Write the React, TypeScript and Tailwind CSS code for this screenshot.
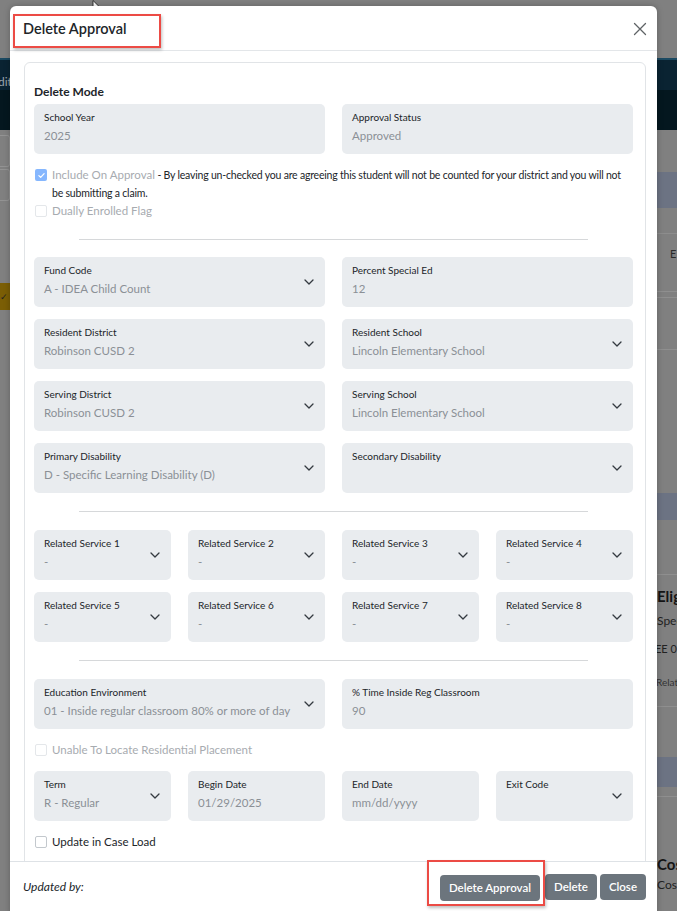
import React from "react";

type FieldProps = { label: string; value?: string; select?: boolean };

function Chevron({ className }: { className?: string }) {
  return (
    <svg viewBox="0 0 10 6" className={className} width="10" height="6" fill="none">
      <path d="M1 1l4 4 4-4" stroke="#343a40" strokeWidth="1.3" strokeLinecap="round" strokeLinejoin="round" />
    </svg>
  );
}

function Field({ label, value, select }: FieldProps) {
  return (
    <div className="relative h-[50px] rounded-[5px] bg-[#e9ecef] pl-[10px] pr-[26px] pt-[6px]">
      <div className="whitespace-nowrap text-[10px] leading-[14px] text-[#212529]">{label}</div>
      <div className="mt-[4px] whitespace-nowrap text-[11.5px] leading-[16px] text-[#8b9096]">{value}</div>
      {select && <Chevron className="absolute right-[11px] top-[22px]" />}
    </div>
  );
}

function Box({ checked, disabled }: { checked?: boolean; disabled?: boolean }) {
  if (checked) {
    return (
      <span className="mt-[3px] flex h-[12px] w-[12px] shrink-0 items-center justify-center rounded-[2px] bg-[#86b7fe]">
        <svg viewBox="0 0 12 12" width="9" height="9" fill="none">
          <path d="M2.5 6.2l2.4 2.3 4.6-5" stroke="white" strokeWidth="1.6" strokeLinecap="round" strokeLinejoin="round" />
        </svg>
      </span>
    );
  }
  return (
    <span
      className={
        disabled
          ? "mt-[3px] h-[12px] w-[12px] shrink-0 rounded-[2px] border border-[#e4e7ea] bg-white"
          : "mt-[3px] h-[12px] w-[12px] shrink-0 rounded-[2px] border border-[#c3c8cd] bg-white"
      }
    />
  );
}

function CheckRow({ label, disabled, className }: { label: string; disabled?: boolean; className?: string }) {
  return (
    <div className={"flex items-start gap-[5px] pl-[1px] " + (className ?? "")}>
      <Box disabled={disabled} />
      <span className={disabled ? "text-[11.5px] leading-[18px] text-[#a7abb0]" : "text-[11.5px] leading-[18px] text-[#212529]"}>
        {label}
      </span>
    </div>
  );
}

function Rule({ className }: { className?: string }) {
  return <div className={"mx-[45px] h-px bg-[#d6d8da] " + (className ?? "")} />;
}

function Background() {
  return (
    <div className="flex h-full flex-col">
      <div className="h-[58px] shrink-0" />
      <div className="h-[2px] shrink-0 bg-[#1c4a62]" />
      <div className="flex h-[30px] shrink-0 items-end bg-[#0a2332]">
        <span className="-ml-[2px] text-[12px] leading-[16px] text-[#9aa6ad]">diti</span>
      </div>
      <div className="h-[40px] shrink-0 bg-[#04171f]" />
      <div className="flex flex-1 justify-between">
        <div className="flex w-[10px] flex-col">
          <div className="mt-[5px] h-[32px] rounded-r-[3px] border border-l-0 border-[#939393]" />
          <div className="mt-[2px] h-[32px] rounded-r-[3px] border border-l-0 border-[#939393]" />
          <div className="mt-[82px] flex h-[27px] items-center bg-[#7b5e05] text-[9px] leading-none text-[#222]">✓</div>
        </div>
        <div className="flex w-[20px] flex-col overflow-hidden whitespace-nowrap">
          <div className="h-[42px]" />
          <div className="h-[36px] bg-[#6c7383]" />
          <div className="h-[26px] border-b border-[#8d8d8d]" />
          <div className="flex h-[40px] items-center pl-[13px] text-[11px] text-[#2a2a2a]">E</div>
          <div className="h-[18px] border-b border-[#8f8f8f]" />
          <div className="h-[6px] border-b border-[#8f8f8f]" />
          <div className="h-[52px] border-b border-[#8f8f8f]" />
          <div className="h-[143px]" />
          <div className="h-[27px] bg-[#6c7383]" />
          <div className="h-[55px] border-b border-[#8f8f8f]" />
          <div className="mt-[11px] text-[15px] font-bold leading-[20px] text-[#141414]">Eligi</div>
          <div className="mt-[7px] text-[12px] leading-[16px] text-[#222]">Spec</div>
          <div className="mt-[12px] -ml-[2px] text-[11px] leading-[16px] text-[#222]">EE 01</div>
          <div className="mt-[18px] -ml-[1px] text-[10px] leading-[14px] text-[#333]">Relat</div>
          <div className="h-[18px] border-b border-[#8f8f8f]" />
          <div className="mt-[50px] h-[30px] bg-[#6c7383]" />
          <div className="h-[10px] border-b border-[#8f8f8f]" />
          <div className="mt-[57px] text-[15px] font-bold leading-[20px] text-[#141414]">Cost</div>
          <div className="mt-[3px] text-[12px] leading-[16px] text-[#222]">Cost</div>
        </div>
      </div>
    </div>
  );
}

export default function App() {
  return (
    <div className="relative h-[911px] w-[677px] overflow-hidden bg-[#808080] font-['Lato','Noto_Sans',sans-serif]">
      <Background />

      <svg className="absolute left-[92px] top-0" width="11" height="16" viewBox="0 0 11 16">
        <path d="M1 0.5v12.5l3-2.8 2.2 4.8 1.9-.9-2.2-4.7h4.1z" fill="white" stroke="#222" strokeWidth="0.9" strokeLinejoin="round" />
      </svg>

      <div className="absolute left-[10px] top-[6px] flex h-[910px] w-[647px] flex-col rounded-t-[6px] bg-white shadow-[0_0_6px_rgba(0,0,0,0.25)]">
        <div className="flex h-[45px] shrink-0 items-start justify-between border-b border-[#e3e6e9]">
          <div className="ml-[3px] mt-[8px] h-[34px] w-[148px] border-2 border-[#ec4b45] pl-[8px] shadow-[1px_2px_3px_rgba(0,0,0,0.25)]">
            <span className="text-[14.5px] font-semibold leading-[26px] text-[#212529]">Delete Approval</span>
          </div>
          <svg className="mr-[10px] mt-[16px]" width="14" height="14" viewBox="0 0 14 14" fill="none">
            <path d="M1.5 1.5l11 11M12.5 1.5l-11 11" stroke="#5f6366" strokeWidth="1.3" strokeLinecap="round" />
          </svg>
        </div>

        <div className="flex-1 overflow-hidden pl-[14px] pr-[11px] pt-[11px]">
          <div className="h-[900px] rounded-[6px] border border-[#e1e4e7] pl-[9px] pr-[12px] pt-[21px]">
            <div className="text-[12px] font-bold leading-[16px] text-[#212529]">Delete Mode</div>
            <div className="mt-[4px] grid grid-cols-2 gap-x-[17px]">
              <Field label="School Year" value="2025" />
              <Field label="Approval Status" value="Approved" />
            </div>

            <div className="mt-[12px] flex items-start gap-[5px] pl-[1px]">
              <Box checked />
              <p className="text-[10.5px] leading-[18px] tracking-[-0.2px] text-[#212529]">
                <span className="text-[11.5px] tracking-normal text-[#a7abb0]">Include On Approval</span> - By leaving
                un-checked you are agreeing this student will not be counted for your district and you will not be
                submitting a claim.
              </p>
            </div>
            <CheckRow label="Dually Enrolled Flag" disabled />

            <Rule className="mt-[19px]" />

            <div className="mt-[17px] grid grid-cols-2 gap-x-[17px] gap-y-[12px]">
              <Field label="Fund Code" value="A - IDEA Child Count" select />
              <Field label="Percent Special Ed" value="12" />
              <Field label="Resident District" value="Robinson CUSD 2" select />
              <Field label="Resident School" value="Lincoln Elementary School" select />
              <Field label="Serving District" value="Robinson CUSD 2" select />
              <Field label="Serving School" value="Lincoln Elementary School" select />
              <Field label="Primary Disability" value="D - Specific Learning Disability (D)" select />
              <Field label="Secondary Disability" value="" select />
            </div>

            <Rule className="mt-[18px]" />

            <div className="mt-[18px] grid grid-cols-4 gap-x-[17px] gap-y-[12px]">
              {[1, 2, 3, 4, 5, 6, 7, 8].map((n) => (
                <Field key={n} label={`Related Service ${n}`} value="-" select />
              ))}
            </div>

            <Rule className="mt-[18px]" />

            <div className="mt-[18px] grid grid-cols-2 gap-x-[17px]">
              <Field label="Education Environment" value="01 - Inside regular classroom 80% or more of day" select />
              <Field label="% Time Inside Reg Classroom" value="90" />
            </div>

            <CheckRow label="Unable To Locate Residential Placement" disabled className="mt-[12px]" />

            <div className="mt-[12px] grid grid-cols-4 gap-x-[17px]">
              <Field label="Term" value="R - Regular" select />
              <Field label="Begin Date" value="01/29/2025" />
              <Field label="End Date" value="mm/dd/yyyy" />
              <Field label="Exit Code" value="" select />
            </div>

            <CheckRow label="Update in Case Load" className="mt-[12px]" />
          </div>
        </div>

        <div className="flex h-[55px] shrink-0 items-start justify-between border-t border-[#dee2e6] pl-[13px] pr-[11px] pt-[12px]">
          <span className="text-[12px] italic leading-[26px] text-[#212529]">Updated by:</span>
          <div className="flex">
            <div className="relative">
              <button className="h-[26px] rounded-[4px] bg-[#6c757d] px-[9px] text-[11.5px] font-semibold text-white">
                Delete Approval
              </button>
              <div className="absolute -bottom-[5px] -left-[13px] -right-[5px] -top-[14px] border-2 border-[#ec4b45] shadow-[1px_2px_3px_rgba(0,0,0,0.25)]" />
            </div>
            <button className="ml-[5px] h-[26px] rounded-[4px] bg-[#6c757d] px-[9px] text-[11.5px] font-semibold text-white">
              Delete
            </button>
            <button className="ml-[3px] h-[26px] rounded-[4px] bg-[#6c757d] px-[9px] text-[11.5px] font-semibold text-white">
              Close
            </button>
          </div>
        </div>
      </div>
    </div>
  );
}
